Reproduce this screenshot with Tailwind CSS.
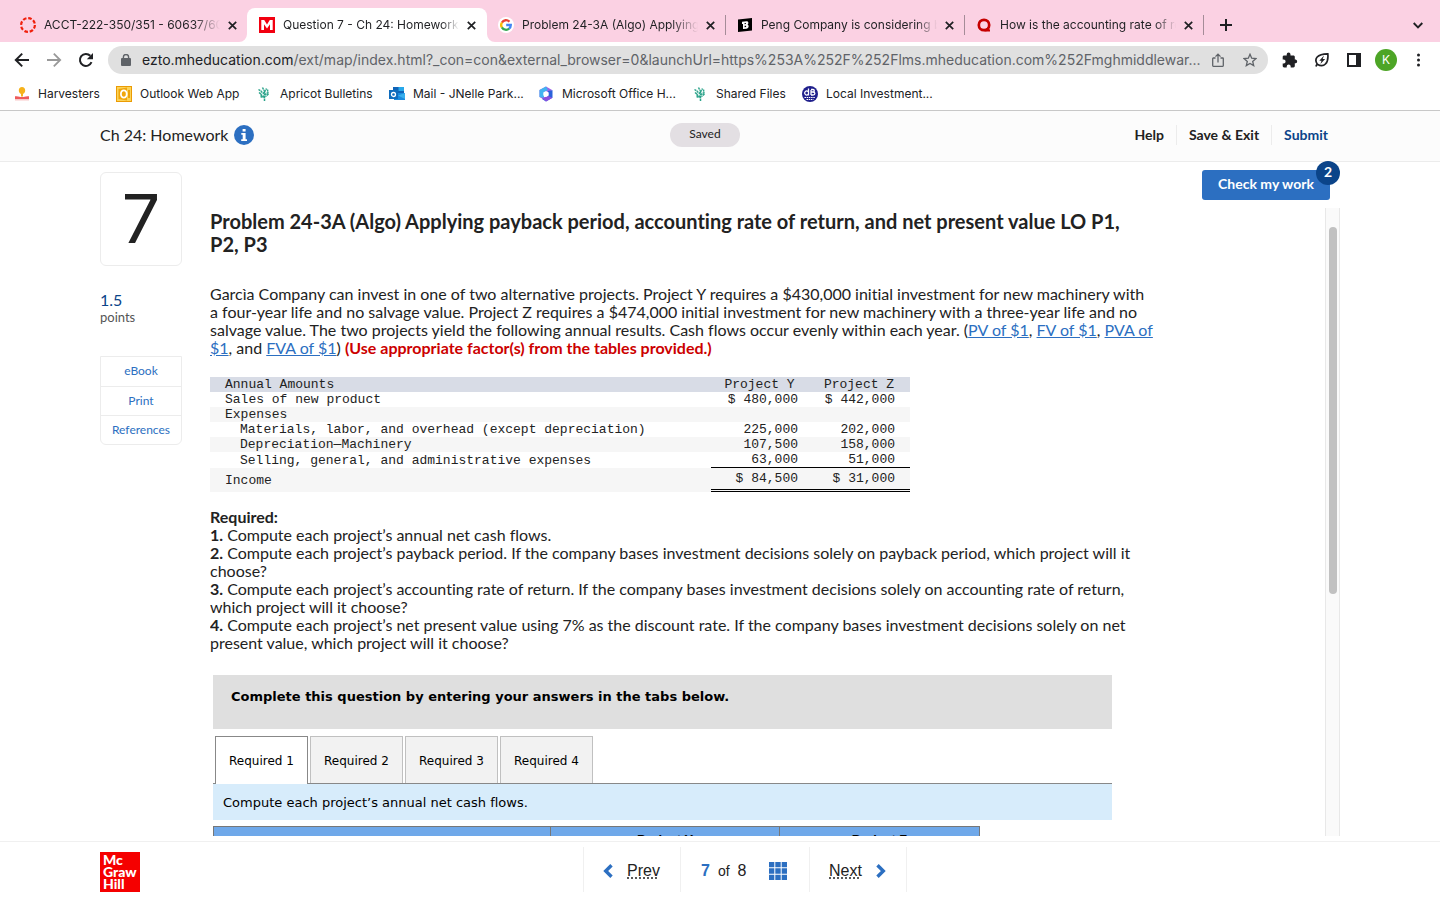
<!DOCTYPE html>
<html lang="en">
<head>
<meta charset="utf-8">
<title>Question 7 - Ch 24: Homework</title>
<script src="https://cdn.jsdelivr.net/npm/@tailwindcss/browser@4"></script>
</head>
<body class="flex h-screen flex-col overflow-hidden bg-white font-[Lato,sans-serif] text-[#222] [font-variant-ligatures:no-common-ligatures]">

<!-- Tab strip -->
<div class="flex h-[42px] shrink-0 items-end bg-[#fbd1e3] pl-2 font-[Inter,sans-serif] text-xs text-[#1f2023]">
  <div class="flex h-[34px] w-[239px] items-center gap-2 pl-3">
    <svg class="size-4 shrink-0" viewBox="0 0 16 16" fill="none" stroke="#f0200c"><circle cx="8" cy="8" r="6.9" stroke-width="2.2" stroke-dasharray="3.6 1.82"/></svg>
    <a href="#" class="w-[176px] overflow-hidden whitespace-nowrap [mask-image:linear-gradient(to_right,black_85%,transparent)]">ACCT-222-350/351 - 60637/606</a>
    <button aria-label="Close tab" class="shrink-0"><svg class="size-[9px]" viewBox="0 0 9 9" stroke="currentColor" stroke-width="1.7"><path d="M.8.8l7.4 7.4M8.2.8L.8 8.2"/></svg></button>
  </div>
  <div class="relative flex h-[34px] w-[240px] items-center gap-2 rounded-t-lg bg-white pl-3">
    <svg class="absolute bottom-0 -left-2 size-2" viewBox="0 0 8 8"><path fill="#fff" d="M8 0v8H0a8 8 0 0 0 8-8z"/></svg>
    <svg class="absolute -right-2 bottom-0 size-2" viewBox="0 0 8 8"><path fill="#fff" d="M0 0v8h8a8 8 0 0 1-8-8z"/></svg>
    <svg class="size-4 shrink-0" viewBox="0 0 16 16"><path fill="#f20010" d="M0 0h16v16H0z"/><path fill="#fff" d="M2.300 13V3h2.900L8 7.400 10.800 3h2.900v10H11V7.300l-3 4.300-3-4.300V13z"/></svg>
    <a href="#" class="w-[176px] overflow-hidden whitespace-nowrap [mask-image:linear-gradient(to_right,black_90%,transparent)]">Question 7 - Ch 24: Homework</a>
    <button aria-label="Close tab" class="shrink-0"><svg class="size-[9px]" viewBox="0 0 9 9" stroke="currentColor" stroke-width="1.7"><path d="M.8.8l7.400 7.400M8.2.8L.8 8.2"/></svg></button>
  </div>
  <div class="flex h-[34px] w-[239px] items-center gap-2 pl-[11px]">
    <svg class="size-4 shrink-0" viewBox="0 0 16 16" fill="none" stroke-width="2.300"><circle cx="8" cy="8" r="8" fill="#fff"/><path stroke="#ea4335" d="M3.900 5.600A4.700 4.700 0 0 1 11.400 4.700"/><path stroke="#fbbc05" d="M3.900 10.500A4.700 4.700 0 0 1 3.900 5.500"/><path stroke="#34a853" d="M11.200 11.500A4.700 4.700 0 0 1 3.900 10.400"/><path stroke="#4285f4" d="M8.200 8h4.600c0 1.600-.5 2.800-1.700 3.700"/></svg>
    <a href="#" class="w-[176px] overflow-hidden whitespace-nowrap [mask-image:linear-gradient(to_right,black_85%,transparent)]">Problem 24-3A (Algo) Applying p</a>
    <button aria-label="Close tab" class="shrink-0"><svg class="size-[9px]" viewBox="0 0 9 9" stroke="currentColor" stroke-width="1.7"><path d="M.8.8l7.400 7.400M8.2.8L.8 8.2"/></svg></button>
    <span class="mb-px ml-auto h-5 w-px bg-[#a58c98]"></span>
  </div>
  <div class="flex h-[34px] w-[239px] items-center gap-2 pl-[11px]">
    <svg class="size-4 shrink-0" viewBox="0 0 16 16"><path d="M1 2.600L15 1v12.600L1 15z"/><path fill="#fff" fill-rule="evenodd" d="M5 4.800l4.500-.5c2.200-.2 2.400 2.600 1 3.300 1.900.8 1.400 3.900-1.100 4.100l-3.400.3V7L5 7.100zM7.600 6v1.200l1.300-.1V5.900zm0 2.800v1.400l1.500-.1V8.700z"/></svg>
    <a href="#" class="w-[176px] overflow-hidden whitespace-nowrap [mask-image:linear-gradient(to_right,black_88%,transparent)]">Peng Company is considering buying</a>
    <button aria-label="Close tab" class="shrink-0"><svg class="size-[9px]" viewBox="0 0 9 9" stroke="currentColor" stroke-width="1.7"><path d="M.8.8l7.400 7.400M8.2.8L.8 8.2"/></svg></button>
    <span class="mb-px ml-auto h-5 w-px bg-[#a58c98]"></span>
  </div>
  <div class="flex h-[34px] w-[239px] items-center gap-2 pl-[11px]">
    <svg class="size-4 shrink-0" viewBox="0 0 16 16" fill="none" stroke="#c60000"><circle cx="8" cy="8" r="5.200" stroke-width="2.700"/><path stroke-width="2" d="M8.500 13.500h5.500M10.800 11l2 2"/></svg>
    <a href="#" class="w-[176px] overflow-hidden whitespace-nowrap [mask-image:linear-gradient(to_right,black_88%,transparent)]">How is the accounting rate of return</a>
    <button aria-label="Close tab" class="shrink-0"><svg class="size-[9px]" viewBox="0 0 9 9" stroke="currentColor" stroke-width="1.7"><path d="M.8.8l7.400 7.400M8.2.8L.8 8.2"/></svg></button>
    <span class="mb-px ml-auto h-5 w-px bg-[#a58c98]"></span>
  </div>
  <button aria-label="New tab" class="mb-[11px] ml-4"><svg class="size-3" viewBox="0 0 12 12" stroke="currentColor" stroke-width="2"><path d="M6 0v12M0 6h12"/></svg></button>
  <button aria-label="Search tabs" class="mr-[17px] mb-[13px] ml-auto"><svg class="h-[7px] w-[10px]" viewBox="0 0 10 7" fill="none" stroke="currentColor" stroke-width="1.900"><path d="M.7 1L5 5.300 9.300 1"/></svg></button>
</div>

<!-- Toolbar -->
<div class="flex h-9 shrink-0 items-center pl-[14px] text-[#202124]">
  <button aria-label="Back"><svg class="size-4" viewBox="0 0 16 16" fill="none" stroke="currentColor" stroke-width="2"><path d="M15 8H2.200M8.200 1.600L1.800 8l6.400 6.400"/></svg></button>
  <button aria-label="Forward" class="ml-4 text-[#999]"><svg class="size-4" viewBox="0 0 16 16" fill="none" stroke="currentColor" stroke-width="1.800"><path d="M1 8h12.800M7.800 1.600L14.200 8l-6.400 6.400"/></svg></button>
  <button aria-label="Reload" class="ml-4"><svg class="size-4" viewBox="0 0 16 16" fill="none"><path stroke="currentColor" stroke-width="2" d="M13.500 10.200A6 6 0 1 1 12.300 3.800"/><path fill="currentColor" d="M15 1v6.200H8.800z"/></svg></button>
  <div class="ml-[14px] flex h-7 min-w-0 flex-1 items-center rounded-full bg-[#e0e0e0] px-3 font-[Inter,sans-serif] text-sm">
    <svg class="ml-[1px] h-3 w-[10px] shrink-0" viewBox="0 0 10 12"><rect y="4" width="10" height="8" rx="1" fill="#5f6368"/><path fill="none" stroke="#5f6368" stroke-width="1.400" d="M2.400 5V3.100a2.600 2.600 0 0 1 5.200 0V5"/></svg>
    <div class="ml-[11px] min-w-0 flex-1 whitespace-nowrap text-[#5f6368]"><span class="text-[#202124]">ezto.mheducation.com</span>/ext/map/index.html?_con=con&amp;external_browser=0&amp;launchUrl=https%253A%252F%252Flms.mheducation.com%252Fmghmiddlewar...</div>
    <button aria-label="Share" class="ml-2 text-[#5f6368]"><svg class="h-[14px] w-3" viewBox="0 0 12 14" fill="none" stroke="currentColor" stroke-width="1.300"><path d="M3.500 5H1.300c-.4 0-.6.200-.6.600v7c0 .4.200.7.600.7h9.400c.4 0 .6-.3.600-.7v-7c0-.4-.2-.6-.6-.6H8.500M6 9.500V1.200M3.500 3.600L6 1.100l2.500 2.500"/></svg></button>
    <button aria-label="Bookmark this page" class="mr-[-1px] ml-[19px] text-[#5f6368]"><svg class="size-[14px]" viewBox="0 0 14 14" fill="none" stroke="currentColor" stroke-width="1.300"><path d="M7 1.300l1.700 3.900 4.200.4-3.200 2.800 1 4.200L7 10.400l-3.700 2.200 1-4.200L1.100 5.600l4.200-.4z"/></svg></button>
  </div>
  <button aria-label="Extensions" class="ml-[14px]"><svg class="size-4" viewBox="0 0 16 16" fill="currentColor"><path d="M13.700 7.600h-.9V4.800c0-.8-.6-1.400-1.400-1.400H8.500v-1a1.900 1.900 0 0 0-3.800 0v1H2.100C1.300 3.400.7 4 .7 4.800v2.700h.9a2 2 0 0 1 0 4H.7v2.600c0 .8.600 1.400 1.400 1.400h2.600v-.9a2 2 0 0 1 4 0v.9h2.700c.8 0 1.400-.6 1.400-1.400v-2.800h.9a1.900 1.900 0 0 0 0-3.700z"/></svg></button>
  <button aria-label="Energy saver" class="ml-4"><svg class="size-4" viewBox="0 0 16 16" fill="none" stroke="currentColor" stroke-width="1.700"><path d="M2 14.500c.2-1 .7-1.700 1.300-2.300C-.2 7 3 1.700 13.800 1.800c1 9.300-3.800 14.500-10.500 10.400"/><path fill="currentColor" stroke="none" d="M10 3.500L5.300 8.700h2.200L6.400 12l4.800-5H8.700z"/></svg></button>
  <button aria-label="Side panel" class="ml-[17px]"><svg class="size-[14px]" viewBox="0 0 14 14"><path fill="currentColor" fill-rule="evenodd" d="M0 0h14v14H0zM2 2v10h7V2z"/></svg></button>
  <button class="ml-[14px] size-[22px] rounded-full bg-[#4da526] font-[Inter,sans-serif] text-xs text-white">K</button>
  <button aria-label="Menu" class="mr-5 ml-[20px]"><svg class="h-[14px] w-[3px]" viewBox="0 0 3 14" fill="currentColor"><circle cx="1.500" cy="2" r="1.500"/><circle cx="1.500" cy="7" r="1.500"/><circle cx="1.500" cy="12" r="1.500"/></svg></button>
</div>

<!-- Bookmarks -->
<nav class="flex h-[33px] shrink-0 items-center border-b border-[#c8c8c8] pl-[14px] font-[Inter,sans-serif] text-xs whitespace-nowrap text-[#202124]">
  <a href="#" class="flex w-[102px] items-center gap-2"><svg class="size-4" viewBox="0 0 16 16"><path fill="#f6b21b" d="M8 1c2 0 3.200 1.400 3.200 3.400C11.200 6.200 10 7.500 9 8v2.500H7V8C6 7.500 4.800 6.200 4.800 4.400 4.800 2.400 6 1 8 1z"/><path fill="#ee5a5a" d="M1 10.300c3-.5 5 .7 7 .7s4-1.200 7-.7V13H1z"/><path fill="#f8c9c9" d="M1 13h14v1.500H1z"/></svg>Harvesters</a>
  <a href="#" class="flex w-[140px] items-center gap-2"><svg class="size-4" viewBox="0 0 16 16"><rect x=".5" y=".5" width="15" height="15" fill="#fbd45a" stroke="#eb9b04"/><path fill="#f1a60b" d="M2.500 3L11 1.500v13L2.500 13z"/><ellipse cx="7.800" cy="8" rx="2.900" ry="3.700" fill="none" stroke="#fff" stroke-width="1.800"/><path fill="#eda30b" d="M12 4h2v8h-2z"/></svg>Outlook Web App</a>
  <a href="#" class="flex w-[133px] items-center gap-2"><svg class="size-4" viewBox="0 0 16 16" fill="none" stroke="#2ba38a" stroke-width="1.500"><path d="M8.500 15V4M8.500 11L4.500 8.500M8.500 8L5 5.500M8.500 9l3.500-2.500M8.500 6l2-3.500M2.500 3.500l3 2M3 6.500l2.500 2M11.500 3.500l.5 4M6.500 1.500l1.500 3M4.500 10.500l3 1M12.500 8l-3 2.500" stroke-dasharray="2.200 .5"/></svg>Apricot Bulletins</a>
  <a href="#" class="flex w-[149px] items-center gap-2"><svg class="size-4" viewBox="0 0 16 16"><path fill="#0f64b8" d="M4 1h11v7H4z"/><path fill="#28a8ea" d="M9.500 1H15v4H9.500z"/><path fill="#1b8ade" d="M5 7h11v7H5z"/><path fill="#38b0ee" d="M16 7v6l-7-3.500z"/><path fill="#0f6cbd" d="M0 4h9v9H0z"/><circle cx="4.500" cy="8.500" r="2" fill="none" stroke="#fff" stroke-width="1.300"/></svg>Mail - JNelle Park...</a>
  <a href="#" class="flex w-[154px] items-center gap-2"><svg class="size-4" viewBox="0 0 16 16"><path fill="#9b63e8" d="M8 .5l6.500 3.700L8 7 5 8v5L1.500 11V4z"/><path fill="#2b62da" d="M14.500 4.200v7.500L8 15.500 4 13l6-3V5z"/><path fill="#42b4f1" d="M1.500 4L8 .5 10 4 6 6v6l-4.500-1z"/><path fill="#8a50e0" d="M4 12l6-2 4.500 1.700L8 15.500z"/><path fill="#fff" d="M8 5l2.700 1.500v3L8 11 5.300 9.500v-3z"/></svg>Microsoft Office H...</a>
  <a href="#" class="flex w-[110px] items-center gap-2"><svg class="size-4" viewBox="0 0 16 16" fill="none" stroke="#2ba38a" stroke-width="1.500"><path d="M8.500 15V4M8.500 11L4.500 8.500M8.500 8L5 5.500M8.500 9l3.500-2.500M8.500 6l2-3.500M2.500 3.500l3 2M3 6.500l2.500 2M11.500 3.500l.5 4M6.500 1.500l1.500 3M4.500 10.500l3 1M12.500 8l-3 2.500" stroke-dasharray="2.200 .5"/></svg>Shared Files</a>
  <a href="#" class="flex items-center gap-2"><svg class="size-4" viewBox="0 0 16 16" fill="none" stroke="#fff"><circle cx="8" cy="8" r="8" fill="#20208c" stroke="none"/><path stroke-width="1.300" d="M6.500 2.500v7M6 5.500a2 2 0 1 0 0 3M9 4v5M9 3.500h2c1.700 0 1.700 2.500 0 2.500H9M11 6c2.500 0 2.500 3 0 3H9"/><path stroke-dasharray="1.500 .7" d="M2.500 11.500h11M4.500 13.500h7"/></svg>Local Investment...</a>
</nav>

<!-- Assignment header -->
<header class="flex h-[51px] shrink-0 items-center border-b border-[#ececec] bg-[#fcfcfc] pr-28 pb-[3px] pl-[100px]">
  <div class="flex flex-1 items-center gap-[6px] text-base">Ch 24: Homework
    <button aria-label="Assignment information"><svg class="size-5" viewBox="0 0 20 20"><circle cx="10" cy="10" r="10" fill="#2c6fc1"/><path fill="#fff" d="M8.600 4h3v2.600h-3zM7.300 8h4.300v6.200H13V16H7.200v-1.800h1.500V9.800H7.300z"/></svg></button>
  </div>
  <div class="mr-[18px] flex h-6 w-[70px] items-center justify-center rounded-full bg-[#e3dfe3] pb-[2px] text-xs">Saved</div>
  <nav class="flex flex-1 items-center justify-end text-sm font-bold whitespace-nowrap">
    <a href="#" class="pr-3">Help</a>
    <a href="#" class="border-l border-[#ececec] px-3">Save &amp; Exit</a>
    <a href="#" class="border-l border-[#ececec] pl-3 text-[#0b4489]">Submit</a>
  </nav>
</header>

<!-- Question -->
<main class="flex min-h-0 flex-1 px-[100px] pb-[5px]">
  <aside class="w-[82px] shrink-0 pt-[10px]">
    <div class="flex h-[94px] items-center justify-center rounded-md border border-[#ececec] pb-[2px] font-[Inter,sans-serif] text-[68px]">7</div>
    <div class="mt-[25px] text-base leading-[18px] text-[#0b4489]">1.5</div>
    <div class="text-[13px] leading-4 text-[#555]">points</div>
    <nav class="mt-[31px] flex flex-col divide-y divide-[#ececec] rounded-b-md border border-[#ececec] text-center text-xs text-[#2c6fc1]">
      <a href="#" class="pt-[6px] pb-[7px]">eBook</a>
      <a href="#" class="py-[6px]">Print</a>
      <a href="#" class="py-[6px]">References</a>
    </nav>
  </aside>

  <div class="flex min-w-0 flex-1 flex-col pl-7">
    <div class="flex h-[46px] shrink-0 justify-end pt-2 pr-[10px]">
      <div class="relative h-[30px]">
        <button class="h-[30px] w-32 rounded-[3px] bg-[#2c6fc1] pb-[2px] text-sm font-bold text-white">Check my work</button>
        <span class="absolute -top-[9px] -right-[10px] flex size-6 items-center justify-center rounded-full bg-[#0b4489] pb-[2px] text-sm font-bold text-white">2</span>
      </div>
    </div>

    <div class="flex min-h-0 flex-1">
      <div class="min-w-0 flex-1 overflow-hidden pt-[2px]">
        <h1 class="text-[20px] leading-[23px] font-bold whitespace-nowrap">Problem 24-3A (Algo) Applying payback period, accounting rate of return, and net present value LO P1,<br>P2, P3</h1>

        <p class="mt-[29px] text-base leading-[18px] whitespace-nowrap">Garcìa Company can invest in one of two alternative projects. Project Y requires a $430,000 initial investment for new machinery with<br>a four-year life and no salvage value. Project Z requires a $474,000 initial investment for new machinery with a three-year life and no<br>salvage value. The two projects yield the following annual results. Cash flows occur evenly within each year. (<a href="#" class="text-[#2c6fc1] underline">PV of $1</a>, <a href="#" class="text-[#2c6fc1] underline">FV of $1</a>, <a href="#" class="text-[#2c6fc1] underline">PVA of<br>$1</a>, and <a href="#" class="text-[#2c6fc1] underline">FVA of $1</a>) <b class="text-[#c00]">(Use appropriate factor(s) from the tables provided.)</b></p>

        <table class="mt-[20px] w-[700px] table-fixed border-separate border-spacing-0 font-['Liberation_Mono',monospace] text-[13px] leading-[14px] [&_td]:pt-px [&_th]:pt-px">
          <colgroup><col class="w-[501px]"><col class="w-[102px]"><col class="w-[97px]"></colgroup>
          <thead>
            <tr class="h-[15px] bg-[#d8dce6]"><th class="pl-[15px] text-left font-normal">Annual Amounts</th><th class="pr-[5px] text-center font-normal">Project Y</th><th class="pr-[5px] text-center font-normal">Project Z</th></tr>
          </thead>
          <tbody class="text-right">
            <tr class="h-[15px]"><td class="pl-[15px] text-left">Sales of new product</td><td class="pr-[15px]">$ 480,000</td><td class="pr-[15px]">$ 442,000</td></tr>
            <tr class="h-[15px] bg-[#f6f6f6]"><td class="pl-[15px] text-left">Expenses</td><td></td><td></td></tr>
            <tr class="h-[15px]"><td class="pl-[30px] text-left">Materials, labor, and overhead (except depreciation)</td><td class="pr-[15px]">225,000</td><td class="pr-[15px]">202,000</td></tr>
            <tr class="h-[15px] bg-[#f6f6f6]"><td class="pl-[30px] text-left">Depreciation—Machinery</td><td class="pr-[15px]">107,500</td><td class="pr-[15px]">158,000</td></tr>
            <tr class="h-4"><td class="pl-[30px] text-left">Selling, general, and administrative expenses</td><td class="border-b border-black pr-[15px]">63,000</td><td class="border-b border-black pr-[15px]">51,000</td></tr>
            <tr class="h-6 bg-[#f6f6f6]"><td class="pl-[15px] text-left">Income</td><td class="border-b-3 border-double border-black pr-[15px]">$ 84,500</td><td class="border-b-3 border-double border-black pr-[15px]">$ 31,000</td></tr>
          </tbody>
        </table>

        <div class="mt-[16px] text-base leading-[18px] whitespace-nowrap">
          <p class="font-bold">Required:</p>
          <p><b>1.</b> Compute each project’s annual net cash flows.</p>
          <p><b>2.</b> Compute each project’s payback period. If the company bases investment decisions solely on payback period, which project will it<br>choose?</p>
          <p><b>3.</b> Compute each project’s accounting rate of return. If the company bases investment decisions solely on accounting rate of return,<br>which project will it choose?</p>
          <p><b>4.</b> Compute each project’s net present value using 7% as the discount rate. If the company bases investment decisions solely on net<br>present value, which project will it choose?</p>
        </div>

        <section class="mt-[23px] ml-[3px] w-[899px] font-['DejaVu_Sans',sans-serif] text-black">
          <div class="h-[54px] bg-[#dfdfdf] pt-3 pl-[18px] text-[13px] leading-5 font-bold">Complete this question by entering your answers in the tabs below.</div>
          <div role="tablist" class="mt-[7px] flex gap-[2px] border-b border-[#888] pl-[2px] text-xs">
            <button role="tab" aria-selected="true" class="-mb-px h-12 w-[93px] border border-b-0 border-[#888] bg-white">Required 1</button>
            <button role="tab" class="h-[47px] w-[93px] border border-b-0 border-[#c0c0c0] bg-[#f2f2f2] pt-[2px]">Required 2</button>
            <button role="tab" class="h-[47px] w-[93px] border border-b-0 border-[#c0c0c0] bg-[#f2f2f2] pt-[2px]">Required 3</button>
            <button role="tab" class="h-[47px] w-[93px] border border-b-0 border-[#c0c0c0] bg-[#f2f2f2] pt-[2px]">Required 4</button>
          </div>
          <div class="flex h-9 items-center bg-[#d7ecfb] pt-[2px] pl-[10px] text-[13px]">Compute each project’s annual net cash flows.</div>
          <table class="mt-[6px] w-[766px] table-fixed border-collapse bg-[#6fa8e9] font-['Liberation_Sans',sans-serif] text-[13px] leading-4">
            <colgroup><col class="w-[337px]"><col class="w-[229px]"><col class="w-[200px]"></colgroup>
            <tr><th class="border border-[#777]"></th><th class="border border-[#777] pt-[5px]">Project Y</th><th class="border border-[#777] pt-[5px]">Project Z</th></tr>
          </table>
        </section>
      </div>

      <!-- Scroll track -->
      <div class="w-[15px] shrink-0 border-x border-[#e8e8e8] bg-[#fafafa] pt-[19px]">
        <div class="mx-auto h-[367px] w-2 rounded-full bg-[#c1c1c1]"></div>
      </div>
    </div>
  </div>
</main>

<!-- Footer -->
<footer class="flex h-[59px] shrink-0 items-start border-t border-[#f0f0f0] px-[100px] font-['Liberation_Sans',sans-serif]">
  <a href="#" class="mt-[10px] block size-10 bg-[#f50000] pt-[2px] pl-[3px] font-[Lato,sans-serif] text-[14px] leading-[12px] font-black text-white">Mc<br>Graw<br>Hill</a>
  <nav class="mt-[5px] flex h-[45px] flex-1 justify-center divide-x divide-[#f0f0f0] pl-[10px] text-base">
    <a href="#" class="flex w-[98px] items-center gap-[14px] border-l border-[#f0f0f0] pt-[3px] pl-[19px]"><svg class="h-[14px] w-[10px]" viewBox="0 0 10 14" fill="none" stroke="#2c6fc1" stroke-width="3.400"><path d="M8.500 1.200L2.700 7l5.800 5.800"/></svg><span class="underline decoration-dotted underline-offset-2">Prev</span></a>
    <div class="flex w-[129px] items-center pt-[3px] pl-5"><b class="text-[#2c6fc1]">7</b><span class="ml-2 text-sm">of</span><span class="ml-2">8</span>
      <button aria-label="All questions" class="ml-[22px]"><svg class="size-[18px]" viewBox="0 0 18 18" fill="#2c6fc1"><path d="M0 0h5.300v5.300H0zM6.300 0h5.400v5.300H6.300zM12.700 0H18v5.300h-5.300zM0 6.300h5.300v5.400H0zM6.300 6.300h5.400v5.400H6.300zM12.700 6.300H18v5.400h-5.300zM0 12.700h5.300V18H0zM6.300 12.700h5.400V18H6.300zM12.700 12.700H18V18h-5.300z"/></svg></button>
    </div>
    <a href="#" class="flex w-[97px] items-center gap-[14px] border-r border-[#f0f0f0] pt-[3px] pl-[19px]"><span class="underline decoration-dotted underline-offset-2">Next</span><svg class="h-[14px] w-[10px]" viewBox="0 0 10 14" fill="none" stroke="#2c6fc1" stroke-width="3.400"><path d="M1.500 1.200L7.300 7l-5.800 5.800"/></svg></a>
  </nav>
</footer>
</body>
</html>
